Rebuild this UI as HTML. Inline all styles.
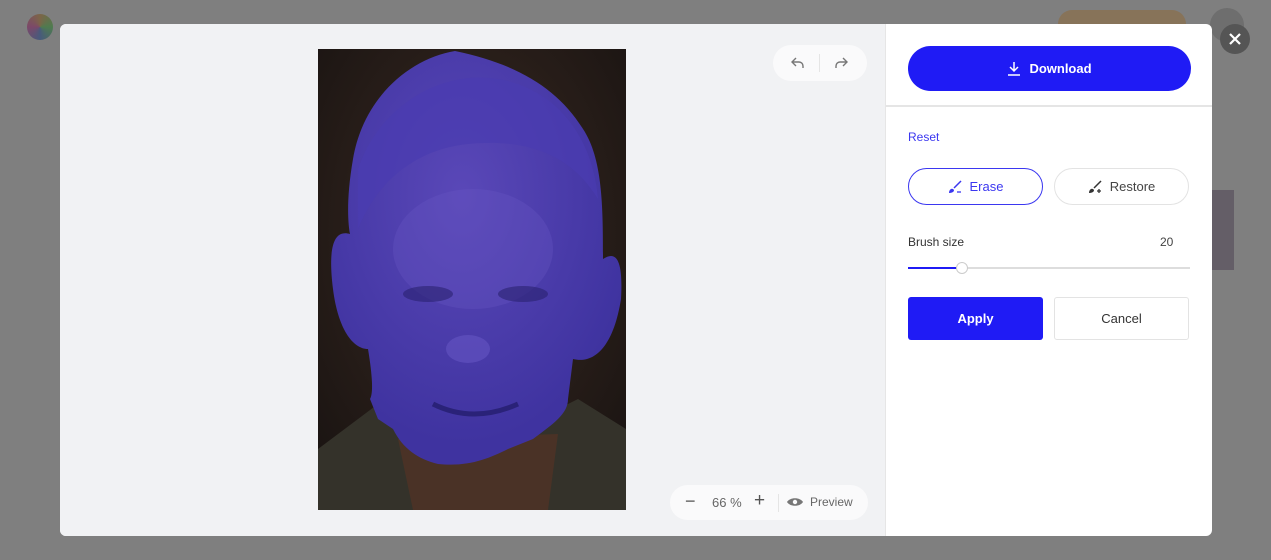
<!DOCTYPE html>
<html><head><meta charset="utf-8"><style>
*{box-sizing:border-box;margin:0;padding:0}
body{width:1271px;height:560px;overflow:hidden;background:#7f7f7f;font-family:"Liberation Sans",sans-serif;position:relative}
.modal{position:absolute;left:60px;top:24px;width:1152px;height:512px;background:#fff;border-radius:6px;overflow:hidden}
.left{position:absolute;left:0;top:0;width:825px;height:512px;background:#f1f2f4}
.img{position:absolute;left:258px;top:25px;width:308px;height:461px}
.undo{position:absolute;left:713px;top:21px;width:94px;height:36px;background:#fafafb;border-radius:18px}
.zoombar{position:absolute;left:610px;top:461px;width:198px;height:35px;background:#fafafb;border-radius:18px;font-size:13px;color:#666}
.right{position:absolute;left:825px;top:0;width:327px;height:512px;border-left:1px solid #e6e6e6}
.dl{position:absolute;left:22px;top:22px;width:283px;height:45px;background:#1f1bf5;border-radius:23px;color:#fff;font-weight:bold;font-size:13px;display:flex;align-items:center;justify-content:center;gap:8px}
.hr{position:absolute;left:0;top:81px;width:327px;height:2px;background:#e5e5e5}
.reset{position:absolute;left:22px;top:106px;color:#3b37f0;font-size:12px}
.pill{position:absolute;top:144px;width:135px;height:37px;border-radius:19px;display:flex;align-items:center;justify-content:center;gap:8px;font-size:13px}
.bs{position:absolute;left:22px;top:211px;font-size:12px;color:#333}
.bv{position:absolute;left:274px;top:211px;font-size:12px;color:#444}
.track{position:absolute;left:22px;top:243px;width:282px;height:2px;background:#ddd}
.btn{position:absolute;top:273px;width:135px;height:43px;border-radius:3px;display:flex;align-items:center;justify-content:center;font-size:13px}
.close{position:absolute;left:1220px;top:24px;width:30px;height:30px;border-radius:50%;background:#555;display:flex;align-items:center;justify-content:center}
</style></head><body>
<div style="position:absolute;left:27px;top:14px;width:26px;height:26px;border-radius:50%;background:conic-gradient(#7a5a30,#3a7a3a,#304a7a,#7a3060,#7a5a30);opacity:.7"></div>
<div style="position:absolute;left:1058px;top:10px;width:128px;height:28px;border-radius:14px;background:#8a7050;opacity:.8"></div>
<div style="position:absolute;left:1210px;top:8px;width:34px;height:34px;border-radius:50%;background:#6e6e6e"></div>
<div style="position:absolute;left:1212px;top:190px;width:22px;height:80px;background:#4a3e50;opacity:.5"></div>
<div class="modal">
 <div class="left">
  <svg class="img" viewBox="0 0 308 461">
   <defs><radialGradient id="bg" cx="0.5" cy="0.4" r="0.7"><stop offset="0" stop-color="#3a2a22"/><stop offset="1" stop-color="#1a1412"/></radialGradient>
   <radialGradient id="fc" cx="0.45" cy="0.35" r="0.6"><stop offset="0" stop-color="#5a48b8"/><stop offset="1" stop-color="#3f33a0"/></radialGradient></defs>
   <rect width="308" height="461" fill="url(#bg)"/>
   <path d="M0 400 L60 355 L120 380 L200 380 L260 350 L308 380 L308 461 L0 461Z" fill="#34322a"/>
   <path d="M80 390 L240 385 L230 461 L95 461Z" fill="#4a3226"/>
   <path d="M137 2 C90 10 45 50 35 110 C28 150 30 175 32 185 C15 180 10 200 15 240 C20 280 35 300 50 300 C55 330 55 345 52 350 L60 370 L75 380 C85 400 100 410 120 415 C150 418 170 410 190 400 L215 390 C235 375 250 365 250 350 L255 310 C275 315 295 300 303 250 C305 215 300 200 285 210 C285 160 285 110 265 80 C240 40 200 15 137 2Z" fill="url(#fc)"/>
   <path d="M40 120 C60 60 120 20 180 30 C240 40 275 90 280 150 C250 100 200 90 150 95 C100 100 60 130 40 180Z" fill="#4a3cb0" opacity=".7"/>
   <ellipse cx="155" cy="200" rx="80" ry="60" fill="#6656c4" opacity=".35"/>
   <ellipse cx="110" cy="245" rx="25" ry="8" fill="#2a2270" opacity=".6"/>
   <ellipse cx="205" cy="245" rx="25" ry="8" fill="#2a2270" opacity=".6"/>
   <ellipse cx="150" cy="300" rx="22" ry="14" fill="#6a5ac8" opacity=".5"/>
   <path d="M115 355 Q155 375 200 355" stroke="#2a2278" stroke-width="5" fill="none"/>
  </svg>
  <div class="undo">
   <svg style="position:absolute;left:17px;top:10px" width="16" height="16" viewBox="0 0 16 16" fill="none" stroke="#777" stroke-width="1.4"><path d="M6 3L2 7l4 4"/><path d="M2 7h7a4 4 0 0 1 4 4v2"/></svg>
   <div style="position:absolute;left:46px;top:9px;width:1px;height:18px;background:#e5e5e5"></div>
   <svg style="position:absolute;left:60px;top:10px" width="16" height="16" viewBox="0 0 16 16" fill="none" stroke="#777" stroke-width="1.4"><path d="M10 3l4 4-4 4"/><path d="M14 7H7a4 4 0 0 0-4 4v2"/></svg>
  </div>
  <div class="zoombar">
   <span style="position:absolute;left:15px;top:6px;font-size:18px;color:#555">−</span>
   <span style="position:absolute;left:42px;top:10px">66 %</span>
   <span style="position:absolute;left:84px;top:5px;font-size:19px;color:#555">+</span>
   <div style="position:absolute;left:108px;top:9px;width:1px;height:18px;background:#e5e5e5"></div>
   <svg style="position:absolute;left:117px;top:11px" width="16" height="12" viewBox="0 0 16 12"><path d="M0 6C3 1 13 1 16 6C13 11 3 11 0 6Z" fill="#777"/><circle cx="8" cy="6" r="2.2" fill="#fafafb"/></svg>
   <span style="position:absolute;left:140px;top:10px;font-size:12px">Preview</span>
  </div>
 </div>
 <div class="right">
  <div class="dl"><svg width="14" height="15" viewBox="0 0 14 15" fill="none" stroke="#fff" stroke-width="1.5"><path d="M7 1v9M3 6l4 4 4-4M1 14h12"/></svg>Download</div>
  <div class="hr"></div>
  <div class="reset">Reset</div>
  <div class="pill" style="left:22px;border:1px solid #3b37f0;color:#3b37f0"><svg width="14" height="14" viewBox="0 0 14 14"><path d="M13 1L6 8" stroke="#3b37f0" stroke-width="1.5"/><path d="M1 13c0-3 2-5 4-4s1 4-4 4z" fill="#3b37f0"/><path d="M9 12h4" stroke="#3b37f0" stroke-width="1.3"/></svg>Erase</div>
  <div class="pill" style="left:168px;border:1px solid #e3e3e3;color:#444"><svg width="14" height="14" viewBox="0 0 14 14"><path d="M13 1L6 8" stroke="#333" stroke-width="1.5"/><path d="M1 13c0-3 2-5 4-4s1 4-4 4z" fill="#333"/><path d="M9 11h4M11 9v4" stroke="#333" stroke-width="1.3"/></svg>Restore</div>
  <div class="bs">Brush size</div>
  <div class="bv">20</div>
  <div class="track"><div style="width:53px;height:2px;background:#1f1bf5"></div><div style="position:absolute;left:48px;top:-5px;width:12px;height:12px;border-radius:50%;background:#fff;border:1.5px solid #ccc"></div></div>
  <div class="btn" style="left:22px;background:#1f1bf5;color:#fff;font-weight:bold">Apply</div>
  <div class="btn" style="left:168px;border:1px solid #e3e3e3;color:#333">Cancel</div>
 </div>
</div>
<div class="close"><svg width="14" height="14" viewBox="0 0 14 14" stroke="#fff" stroke-width="2.2"><path d="M2 2l10 10M12 2L2 12"/></svg></div>
</body></html>
